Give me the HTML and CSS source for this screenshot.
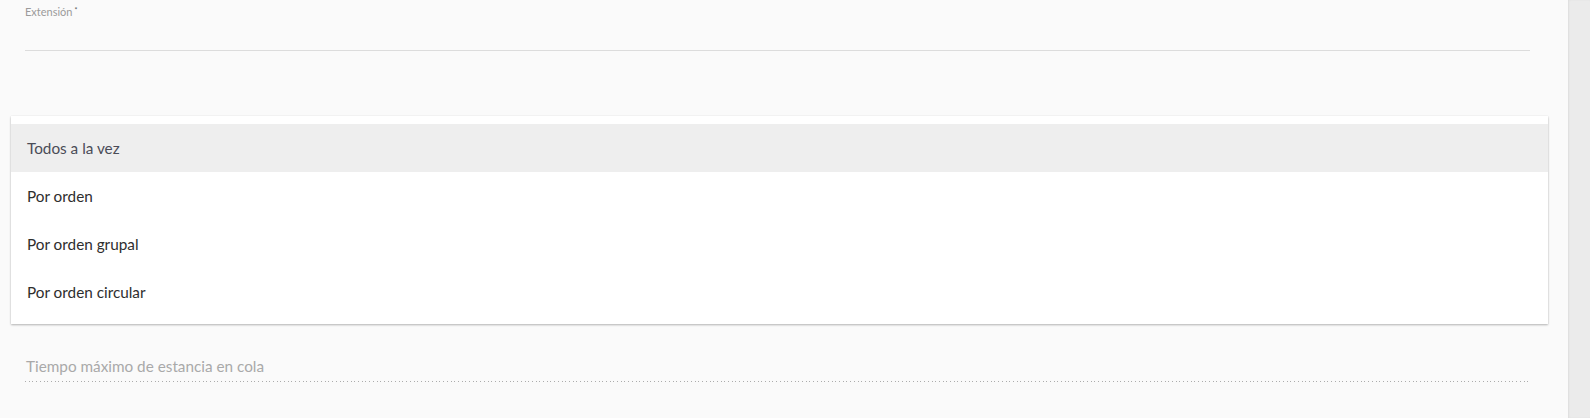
FILE: index.html
```html
<!DOCTYPE html>
<html lang="es">
<head>
<meta charset="utf-8">
<link rel="stylesheet" href="styles.css">
</head>
<body>
<div class="page">
  <div class="panel">
    <div class="field field-ext">
      <label class="label">Extensión<sup class="req">*</sup></label>
      <div class="underline"></div>
    </div>
    <div class="field field-select">
      <ul class="menu">
        <li class="opt active">Todos a la vez</li>
        <li class="opt">Por orden</li>
        <li class="opt">Por orden grupal</li>
        <li class="opt">Por orden circular</li>
      </ul>
    </div>
    <div class="field field-time">
      <div class="placeholder">Tiempo máximo de estancia en cola</div>
      <div class="dotted"></div>
    </div>
  </div>
  <div class="side"></div>
</div>
</body>
</html>
```
FILE: styles.css
```css
html, body {
  margin: 0;
  padding: 0;
  height: 100%;
}
body {
  font-family: "Lato", "Open Sans", sans-serif;
  background: #ececec;
}
.page {
  display: flex;
  width: 1590px;
  height: 418px;
  overflow: hidden;
}
.panel {
  width: 1568px;
  background: #fafafa;
  position: relative;
  display: flex;
  flex-direction: column;
}
.side {
  flex: 1;
  background: #ebebeb;
  box-shadow: inset 1px 0 2px rgba(0,0,0,0.06);
}
.field {
  margin: 0 38px 0 25px;
}
.field-ext {
  padding-top: 5px;
}
.label {
  display: block;
  font-size: 11px;
  line-height: 13px;
  color: #9b9b9b;
}
.req {
  font-size: 7px;
  vertical-align: top;
  position: relative;
  top: -1px;
  margin-left: 2px;
  color: #555;
}
.underline {
  margin-top: 32px;
  height: 1px;
  background: #dcdcdc;
}
.field-select {
  position: relative;
  height: 300px;
}
.menu {
  position: absolute;
  left: -14px;
  right: -18px;
  top: 65px;
  margin: 0;
  padding: 8px 0;
  list-style: none;
  background: #fff;
  box-shadow: 0 1px 2px rgba(0,0,0,0.28), 0 0 1px rgba(0,0,0,0.08);
}
.opt {
  height: 48px;
  line-height: 48px;
  padding-left: 16px;
  font-size: 15.3px;
  color: #2e2e2e;
}
.opt.active {
  background: #eeeeee;
  color: #4a4c57;
}
.field-time {
  position: absolute;
  left: 0;
  right: 0;
  top: 357px;
}
.placeholder {
  font-size: 15.3px;
  line-height: 19px;
  color: #a9a9a9;
  padding-left: 1px;
}
.dotted {
  margin-top: 5px;
  height: 1px;
  background-image: repeating-linear-gradient(to right, #acacac 0 1px, transparent 1px 3.7px);
}
```
